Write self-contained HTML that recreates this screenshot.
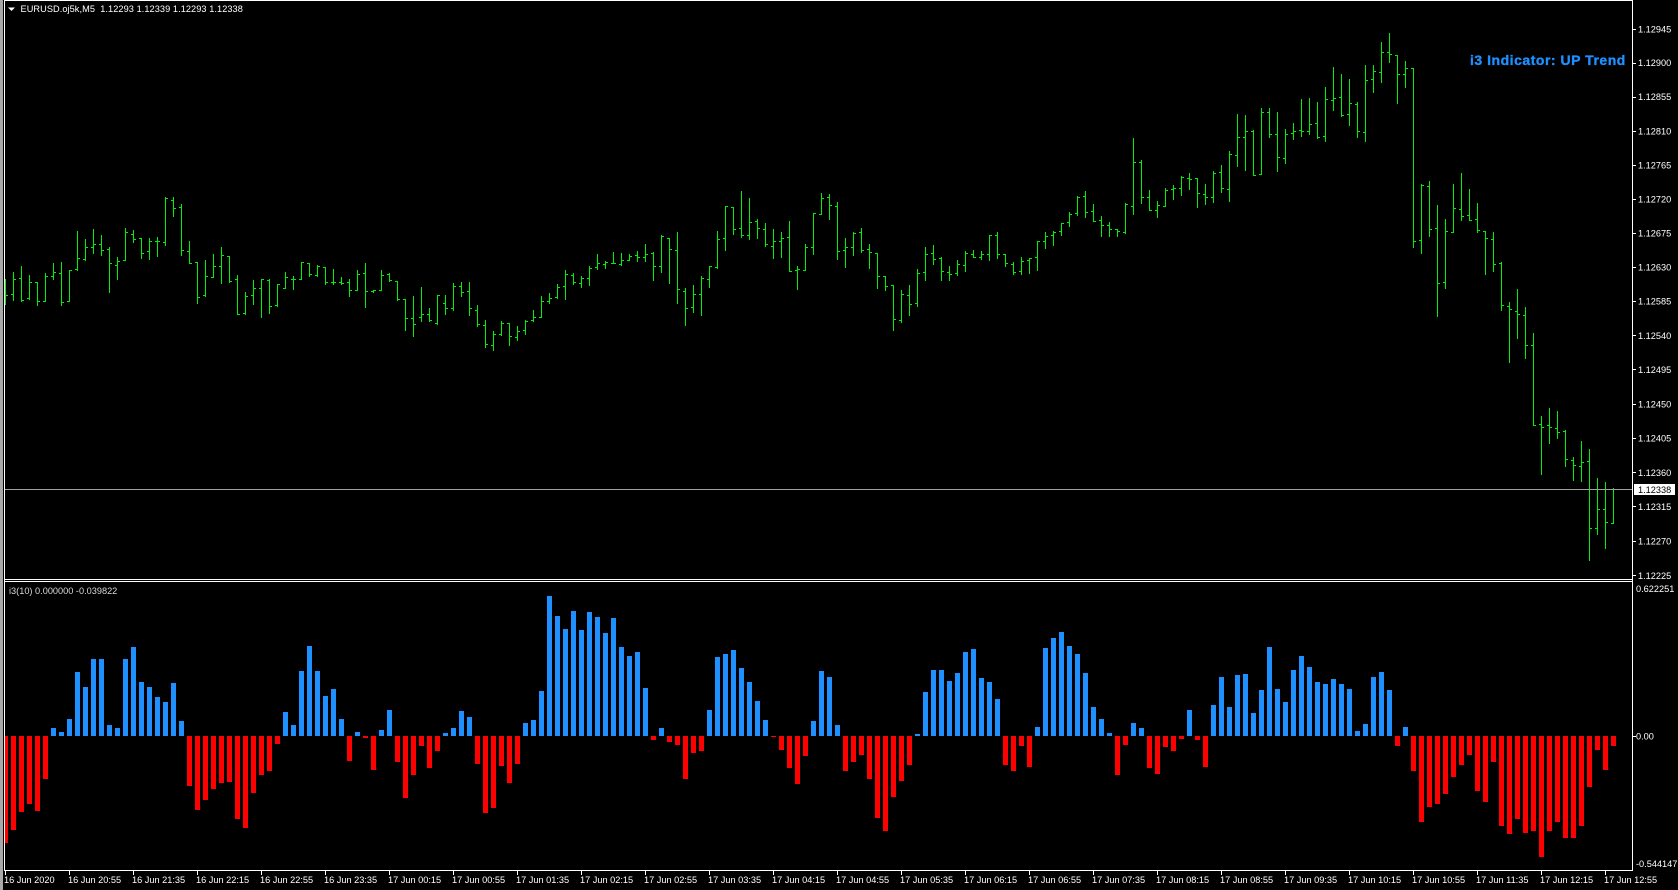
<!DOCTYPE html>
<html><head><meta charset="utf-8"><title>EURUSD M5</title>
<style>
html,body{margin:0;padding:0;background:#000;width:1678px;height:890px;overflow:hidden}
svg{display:block;position:absolute;left:0;top:0}
text{font-family:"Liberation Sans",sans-serif;font-size:9.2px;fill:#fff;white-space:pre}
</style></head><body>
<svg width="1678" height="890" viewBox="0 0 1678 890" xmlns="http://www.w3.org/2000/svg" shape-rendering="crispEdges">
<rect width="1678" height="890" fill="#000"/>
<path fill="none" stroke="#00ee08" stroke-width="1" d="M5.5 279V305M6 295.5h2
M13.5 272V301M11 294.5h2M14 279.5h2
M21.5 266V302M19 278.5h2M22 300.5h2
M29.5 275V300M27 298.5h2M30 282.5h2
M37.5 282V306M35 282.5h2M38 301.5h2
M45.5 273V302M43 301.5h2M46 276.5h2
M53.5 263V280M51 276.5h2M54 272.5h2
M61.5 262V306M59 273.5h2M62 302.5h2
M69.5 270V302M67 301.5h2M70 270.5h2
M77.5 231V271M75 269.5h2M78 258.5h2
M85.5 239V261M83 259.5h2M86 247.5h2
M93.5 229V254M91 247.5h2M94 244.5h2
M101.5 235V256M99 244.5h2M102 250.5h2
M109.5 247V293M107 249.5h2M110 263.5h2
M117.5 257V280M115 265.5h2M118 261.5h2
M125.5 228V261M123 260.5h2M126 232.5h2
M133.5 230V243M131 234.5h2M134 239.5h2
M141.5 238V259M139 238.5h2M142 253.5h2
M149.5 238V260M147 251.5h2M150 241.5h2
M157.5 237V257M155 241.5h2M158 241.5h2
M165.5 197V246M163 242.5h2M166 198.5h2
M173.5 197V217M171 200.5h2M174 208.5h2
M181.5 204V256M179 207.5h2M182 250.5h2
M189.5 241V264M187 251.5h2M190 263.5h2
M197.5 262V304M195 262.5h2M198 297.5h2
M205.5 260V297M203 295.5h2M206 276.5h2
M213.5 254V278M211 277.5h2M214 266.5h2
M221.5 247V284M219 266.5h2M222 255.5h2
M229.5 256V283M227 256.5h2M230 281.5h2
M237.5 275V315M235 279.5h2M238 314.5h2
M245.5 292V315M243 313.5h2M246 296.5h2
M253.5 280V305M251 295.5h2M254 288.5h2
M261.5 279V318M259 288.5h2M262 279.5h2
M269.5 279V314M267 280.5h2M270 306.5h2
M277.5 284V307M275 305.5h2M278 284.5h2
M285.5 272V289M283 288.5h2M286 277.5h2
M293.5 276V290M291 279.5h2M294 279.5h2
M301.5 262V280M299 279.5h2M302 262.5h2
M309.5 263V277M307 263.5h2M310 274.5h2
M317.5 265V277M315 275.5h2M318 266.5h2
M325.5 267V285M323 267.5h2M326 282.5h2
M333.5 269V285M331 282.5h2M334 282.5h2
M341.5 277V285M339 282.5h2M342 283.5h2
M349.5 279V297M347 282.5h2M350 290.5h2
M357.5 270V291M355 290.5h2M358 274.5h2
M365.5 263V308M363 273.5h2M366 291.5h2
M373.5 290V293M371 291.5h2M374 290.5h2
M381.5 270V291M379 290.5h2M382 275.5h2
M389.5 273V282M387 274.5h2M390 280.5h2
M397.5 281V301M395 281.5h2M398 299.5h2
M405.5 299V331M403 299.5h2M406 318.5h2
M413.5 296V337M411 318.5h2M414 324.5h2
M421.5 287V322M419 317.5h2M422 314.5h2
M429.5 308V322M427 314.5h2M430 320.5h2
M437.5 295V325M435 323.5h2M438 295.5h2
M445.5 295V315M443 303.5h2M446 308.5h2
M453.5 283V311M451 308.5h2M454 286.5h2
M461.5 282V297M459 286.5h2M462 292.5h2
M469.5 282V316M467 291.5h2M470 308.5h2
M477.5 305V327M475 310.5h2M478 324.5h2
M485.5 320V348M483 325.5h2M486 344.5h2
M493.5 331V351M491 345.5h2M494 334.5h2
M501.5 321V336M499 334.5h2M502 323.5h2
M509.5 323V346M507 323.5h2M510 336.5h2
M517.5 326V341M515 337.5h2M518 331.5h2
M525.5 320V335M523 330.5h2M526 321.5h2
M533.5 310V322M531 320.5h2M534 317.5h2
M541.5 296V318M539 317.5h2M542 301.5h2
M549.5 293V304M547 301.5h2M550 298.5h2
M557.5 284V299M555 297.5h2M558 287.5h2
M565.5 270V300M563 286.5h2M566 274.5h2
M573.5 273V285M571 275.5h2M574 282.5h2
M581.5 276V288M579 283.5h2M582 278.5h2
M589.5 266V286M587 278.5h2M590 268.5h2
M597.5 254V270M595 267.5h2M598 263.5h2
M605.5 261V269M603 264.5h2M606 262.5h2
M613.5 252V264M611 263.5h2M614 263.5h2
M621.5 253V266M619 264.5h2M622 260.5h2
M629.5 254V261M627 260.5h2M630 256.5h2
M637.5 251V262M635 255.5h2M638 257.5h2
M645.5 244V262M643 257.5h2M646 254.5h2
M653.5 252V281M651 253.5h2M654 266.5h2
M661.5 235V273M659 266.5h2M662 236.5h2
M669.5 238V284M667 238.5h2M670 249.5h2
M677.5 232V304M675 250.5h2M678 289.5h2
M685.5 288V326M683 291.5h2M686 308.5h2
M693.5 285V313M691 307.5h2M694 294.5h2
M701.5 276V316M699 294.5h2M702 278.5h2
M709.5 266V288M707 279.5h2M710 266.5h2
M717.5 231V269M715 267.5h2M718 239.5h2
M725.5 206V251M723 238.5h2M726 206.5h2
M733.5 207V235M731 207.5h2M734 229.5h2
M741.5 191V238M739 228.5h2M742 235.5h2
M749.5 198V240M747 235.5h2M750 222.5h2
M757.5 219V239M755 221.5h2M758 228.5h2
M765.5 223V247M763 229.5h2M766 244.5h2
M773.5 229V259M771 246.5h2M774 241.5h2
M781.5 232V258M779 241.5h2M782 238.5h2
M789.5 221V272M787 237.5h2M790 271.5h2
M797.5 266V290M795 270.5h2M798 269.5h2
M805.5 244V271M803 270.5h2M806 247.5h2
M813.5 213V255M811 247.5h2M814 213.5h2
M821.5 193V215M819 214.5h2M822 198.5h2
M829.5 194V220M827 197.5h2M830 205.5h2
M837.5 202V260M835 206.5h2M838 251.5h2
M845.5 238V268M843 250.5h2M846 247.5h2
M853.5 232V256M851 247.5h2M854 233.5h2
M861.5 228V253M859 232.5h2M862 250.5h2
M869.5 244V269M867 249.5h2M870 252.5h2
M877.5 253V289M875 253.5h2M878 276.5h2
M885.5 276V291M883 276.5h2M886 286.5h2
M893.5 285V331M891 285.5h2M894 319.5h2
M901.5 290V323M899 320.5h2M902 294.5h2
M909.5 285V316M907 295.5h2M910 304.5h2
M917.5 269V307M915 303.5h2M918 273.5h2
M925.5 247V281M923 272.5h2M926 254.5h2
M933.5 245V265M931 253.5h2M934 259.5h2
M941.5 257V281M939 258.5h2M942 271.5h2
M949.5 266V281M947 272.5h2M950 274.5h2
M957.5 260V276M955 273.5h2M958 264.5h2
M965.5 251V272M963 265.5h2M966 253.5h2
M973.5 250V258M971 254.5h2M974 257.5h2
M981.5 251V260M979 257.5h2M982 254.5h2
M989.5 235V261M987 254.5h2M990 235.5h2
M997.5 232V259M995 235.5h2M998 254.5h2
M1005.5 254V267M1003 254.5h2M1006 263.5h2
M1013.5 262V275M1011 264.5h2M1014 272.5h2
M1021.5 257V275M1019 271.5h2M1022 261.5h2
M1029.5 258V274M1027 260.5h2M1030 258.5h2
M1037.5 241V271M1035 257.5h2M1038 241.5h2
M1045.5 232V249M1043 241.5h2M1046 236.5h2
M1053.5 231V246M1051 235.5h2M1054 232.5h2
M1061.5 223V236M1059 231.5h2M1062 223.5h2
M1069.5 212V227M1067 222.5h2M1070 214.5h2
M1077.5 196V216M1075 213.5h2M1078 197.5h2
M1085.5 191V218M1083 196.5h2M1086 212.5h2
M1093.5 204V222M1091 211.5h2M1094 221.5h2
M1101.5 216V237M1099 220.5h2M1102 225.5h2
M1109.5 222V237M1107 225.5h2M1110 229.5h2
M1117.5 229V237M1115 229.5h2M1118 231.5h2
M1125.5 203V234M1123 232.5h2M1126 204.5h2
M1133.5 138V215M1131 206.5h2M1134 162.5h2
M1141.5 160V204M1139 162.5h2M1142 197.5h2
M1149.5 190V211M1147 197.5h2M1150 210.5h2
M1157.5 201V218M1155 210.5h2M1158 205.5h2
M1165.5 188V207M1163 206.5h2M1166 190.5h2
M1173.5 185V200M1171 189.5h2M1174 188.5h2
M1181.5 176V196M1179 188.5h2M1182 177.5h2
M1189.5 173V190M1187 178.5h2M1190 179.5h2
M1197.5 178V208M1195 178.5h2M1198 193.5h2
M1205.5 184V205M1203 194.5h2M1206 197.5h2
M1213.5 171V203M1211 197.5h2M1214 173.5h2
M1221.5 165V193M1219 172.5h2M1222 188.5h2
M1229.5 151V202M1227 189.5h2M1230 154.5h2
M1237.5 114V167M1235 155.5h2M1238 137.5h2
M1245.5 115V171M1243 137.5h2M1246 131.5h2
M1253.5 130V176M1251 131.5h2M1254 175.5h2
M1261.5 108V175M1259 174.5h2M1262 112.5h2
M1269.5 108V138M1267 112.5h2M1270 134.5h2
M1277.5 112V172M1275 134.5h2M1278 157.5h2
M1285.5 129V164M1283 158.5h2M1286 134.5h2
M1293.5 123V140M1291 133.5h2M1294 131.5h2
M1301.5 99V137M1299 130.5h2M1302 131.5h2
M1309.5 98V135M1307 131.5h2M1310 124.5h2
M1317.5 102V139M1315 123.5h2M1318 137.5h2
M1325.5 87V142M1323 136.5h2M1326 99.5h2
M1333.5 67V111M1331 100.5h2M1334 98.5h2
M1341.5 74V117M1339 97.5h2M1342 115.5h2
M1349.5 79V126M1347 114.5h2M1350 103.5h2
M1357.5 102V138M1355 104.5h2M1358 131.5h2
M1365.5 65V142M1363 132.5h2M1366 80.5h2
M1373.5 65V93M1371 79.5h2M1374 71.5h2
M1381.5 42V83M1379 72.5h2M1382 52.5h2
M1389.5 33V63M1387 52.5h2M1390 54.5h2
M1397.5 55V104M1395 55.5h2M1398 74.5h2
M1405.5 61V88M1403 74.5h2M1406 68.5h2
M1413.5 68V248M1411 68.5h2M1414 241.5h2
M1421.5 184V254M1419 240.5h2M1422 185.5h2
M1429.5 181V237M1427 186.5h2M1430 229.5h2
M1437.5 205V317M1435 228.5h2M1438 283.5h2
M1445.5 219V289M1443 282.5h2M1446 231.5h2
M1453.5 184V233M1451 232.5h2M1454 208.5h2
M1461.5 173V221M1459 209.5h2M1462 216.5h2
M1469.5 189V221M1467 215.5h2M1470 220.5h2
M1477.5 203V233M1475 219.5h2M1478 230.5h2
M1485.5 231V275M1483 231.5h2M1486 238.5h2
M1493.5 232V272M1491 239.5h2M1494 264.5h2
M1501.5 262V311M1499 263.5h2M1502 305.5h2
M1509.5 302V363M1507 306.5h2M1510 309.5h2
M1517.5 289V339M1515 311.5h2M1518 314.5h2
M1525.5 307V359M1523 315.5h2M1526 345.5h2
M1533.5 333V426M1531 345.5h2M1534 425.5h2
M1541.5 416V475M1539 424.5h2M1542 427.5h2
M1549.5 408V444M1547 425.5h2M1550 427.5h2
M1557.5 411V439M1555 428.5h2M1558 432.5h2
M1565.5 430V467M1563 431.5h2M1566 459.5h2
M1573.5 457V481M1571 460.5h2M1574 465.5h2
M1581.5 441V482M1579 466.5h2M1582 462.5h2
M1589.5 449V561M1587 461.5h2M1590 528.5h2
M1597.5 478V535M1595 528.5h2M1598 509.5h2
M1605.5 482V549M1603 509.5h2M1606 522.5h2
M1613.5 488V524M1611 523.5h2M1614 489.5h2"/>
<path fill="none" stroke="#1e90ff" stroke-width="5" d="M53.5 736v-8M61.5 736v-4M69.5 736v-17M77.5 736v-64M85.5 736v-49M93.5 736v-77M101.5 736v-77M109.5 736v-11M117.5 736v-8M125.5 736v-77M133.5 736v-89M141.5 736v-54M149.5 736v-49M157.5 736v-39M165.5 736v-34M173.5 736v-53M181.5 736v-15
M285.5 736v-24M293.5 736v-11M301.5 736v-65M309.5 736v-90M317.5 736v-65M325.5 736v-40M333.5 736v-47M341.5 736v-17M357.5 736v-4M381.5 736v-6M389.5 736v-26
M445.5 736v-3M453.5 736v-8M461.5 736v-25M469.5 736v-19
M525.5 736v-13M533.5 736v-16M541.5 736v-45M549.5 736v-140M557.5 736v-120M565.5 736v-107M573.5 736v-125M581.5 736v-106M589.5 736v-124M597.5 736v-119M605.5 736v-103M613.5 736v-118M621.5 736v-89M629.5 736v-80M637.5 736v-84M645.5 736v-48M661.5 736v-8
M709.5 736v-26M717.5 736v-79M725.5 736v-82M733.5 736v-86M741.5 736v-68M749.5 736v-54M757.5 736v-35M765.5 736v-16
M813.5 736v-15M821.5 736v-65M829.5 736v-59M837.5 736v-11
M917.5 736v-2M925.5 736v-44M933.5 736v-66M941.5 736v-66M949.5 736v-55M957.5 736v-63M965.5 736v-84M973.5 736v-87M981.5 736v-58M989.5 736v-54M997.5 736v-37
M1037.5 736v-9M1045.5 736v-88M1053.5 736v-98M1061.5 736v-104M1069.5 736v-90M1077.5 736v-82M1085.5 736v-63M1093.5 736v-29M1101.5 736v-17M1109.5 736v-3
M1133.5 736v-13M1141.5 736v-8M1189.5 736v-26
M1213.5 736v-31M1221.5 736v-59M1229.5 736v-29M1237.5 736v-61M1245.5 736v-62M1253.5 736v-23M1261.5 736v-46M1269.5 736v-89M1277.5 736v-47M1285.5 736v-34M1293.5 736v-66M1301.5 736v-80M1309.5 736v-69M1317.5 736v-54M1325.5 736v-52M1333.5 736v-57M1341.5 736v-52M1349.5 736v-47M1357.5 736v-5M1365.5 736v-12M1373.5 736v-59M1381.5 736v-64M1389.5 736v-46M1405.5 736v-9"/>
<path fill="none" stroke="#ff0000" stroke-width="5" d="M5.5 736v107M13.5 736v94M21.5 736v76M29.5 736v68M37.5 736v75M45.5 736v43
M189.5 736v50M197.5 736v74M205.5 736v64M213.5 736v53M221.5 736v47M229.5 736v46M237.5 736v83M245.5 736v92M253.5 736v57M261.5 736v39M269.5 736v35M277.5 736v8
M349.5 736v25M365.5 736v2M373.5 736v34M397.5 736v26M405.5 736v62M413.5 736v39M421.5 736v10M429.5 736v32M437.5 736v15
M477.5 736v28M485.5 736v77M493.5 736v72M501.5 736v30M509.5 736v47M517.5 736v28
M653.5 736v4M669.5 736v6M677.5 736v9M685.5 736v43M693.5 736v17M701.5 736v15
M773.5 736v1M781.5 736v14M789.5 736v32M797.5 736v48M805.5 736v20
M845.5 736v35M853.5 736v26M861.5 736v19M869.5 736v43M877.5 736v82M885.5 736v95M893.5 736v61M901.5 736v45M909.5 736v29
M1005.5 736v29M1013.5 736v35M1021.5 736v10M1029.5 736v31
M1117.5 736v39M1125.5 736v9M1149.5 736v32M1157.5 736v38M1165.5 736v11M1173.5 736v15M1181.5 736v3M1197.5 736v4M1205.5 736v31
M1397.5 736v10
M1413.5 736v35M1421.5 736v86M1429.5 736v71M1437.5 736v68M1445.5 736v58M1453.5 736v41M1461.5 736v29M1469.5 736v19M1477.5 736v55M1485.5 736v66M1493.5 736v26M1501.5 736v90M1509.5 736v98M1517.5 736v83M1525.5 736v97M1533.5 736v95M1541.5 736v121M1549.5 736v95M1557.5 736v86M1565.5 736v102M1573.5 736v102M1581.5 736v90M1589.5 736v51M1597.5 736v14M1605.5 736v34M1613.5 736v10"/>
<rect x="3" y="0" width="2" height="890" fill="#000"/>
<rect x="5" y="489" width="1627" height="1" fill="#a0a0a0"/>
<rect x="0" y="0" width="3" height="890" fill="#a8a8a8"/>
<g fill="#fff">
<rect x="4" y="0" width="1629" height="1"/>
<rect x="4" y="0" width="1" height="871"/>
<rect x="4" y="579" width="1629" height="1"/>
<rect x="4" y="581" width="1629" height="1"/>
<rect x="1632" y="0" width="1" height="871"/>
<rect x="4" y="870" width="1629" height="1"/>
</g>
<path fill="none" stroke="#fff" d="M1633 29.5h3M1633 63.5h3M1633 97.5h3M1633 131.5h3M1633 165.5h3M1633 199.5h3M1633 233.5h3M1633 267.5h3M1633 301.5h3M1633 335.5h3M1633 369.5h3M1633 404.5h3M1633 438.5h3M1633 472.5h3M1633 506.5h3M1633 541.5h3M1633 575.5h3M1633 736.5h3
M5.5 871v4M69.5 871v4M133.5 871v4M197.5 871v4M261.5 871v4M325.5 871v4M389.5 871v4M453.5 871v4M517.5 871v4M581.5 871v4M645.5 871v4M709.5 871v4M773.5 871v4M837.5 871v4M901.5 871v4M965.5 871v4M1029.5 871v4M1093.5 871v4M1157.5 871v4M1221.5 871v4M1285.5 871v4M1349.5 871v4M1413.5 871v4M1477.5 871v4M1541.5 871v4M1605.5 871v4"/>
<path fill="#fff" shape-rendering="auto" d="M8 7.5h7l-3.5 3.5z"/>
<rect x="1634" y="484" width="41" height="11" fill="#fff"/>
<g shape-rendering="auto">
<text x="20.5" y="12" style="letter-spacing:.07px">EURUSD.oj5k,M5  1.12293 1.12339 1.12293 1.12338</text>
<text x="9" y="594" style="fill:#d8d8d8">i3(10) 0.000000 -0.039822</text>
<text x="1470" y="65" style="font-size:14px;font-weight:bold;fill:#1e90ff;stroke:#1e90ff;stroke-width:.35px;letter-spacing:.52px">i3 Indicator: UP Trend</text>
<text x="1638" y="32.5">1.12945</text>
<text x="1638" y="66">1.12900</text>
<text x="1638" y="100">1.12855</text>
<text x="1638" y="134.5">1.12810</text>
<text x="1638" y="168.5">1.12765</text>
<text x="1638" y="202.5">1.12720</text>
<text x="1638" y="236.5">1.12675</text>
<text x="1638" y="270.5">1.12630</text>
<text x="1638" y="304.5">1.12585</text>
<text x="1638" y="339">1.12540</text>
<text x="1638" y="373">1.12495</text>
<text x="1638" y="407.5">1.12450</text>
<text x="1638" y="441.5">1.12405</text>
<text x="1638" y="476">1.12360</text>
<text x="1638" y="493" style="fill:#000">1.12338</text>
<text x="1638" y="510">1.12315</text>
<text x="1638" y="544.5">1.12270</text>
<text x="1638" y="579">1.12225</text>
<text x="1636" y="592">0.622251</text>
<text x="1636" y="739.5">0.00</text>
<text x="1636" y="867">-0.544147</text>
<text x="4" y="883">16 Jun 2020</text>
<text x="68" y="883">16 Jun 20:55</text>
<text x="132" y="883">16 Jun 21:35</text>
<text x="196" y="883">16 Jun 22:15</text>
<text x="260" y="883">16 Jun 22:55</text>
<text x="324" y="883">16 Jun 23:35</text>
<text x="388" y="883">17 Jun 00:15</text>
<text x="452" y="883">17 Jun 00:55</text>
<text x="516" y="883">17 Jun 01:35</text>
<text x="580" y="883">17 Jun 02:15</text>
<text x="644" y="883">17 Jun 02:55</text>
<text x="708" y="883">17 Jun 03:35</text>
<text x="772" y="883">17 Jun 04:15</text>
<text x="836" y="883">17 Jun 04:55</text>
<text x="900" y="883">17 Jun 05:35</text>
<text x="964" y="883">17 Jun 06:15</text>
<text x="1028" y="883">17 Jun 06:55</text>
<text x="1092" y="883">17 Jun 07:35</text>
<text x="1156" y="883">17 Jun 08:15</text>
<text x="1220" y="883">17 Jun 08:55</text>
<text x="1284" y="883">17 Jun 09:35</text>
<text x="1348" y="883">17 Jun 10:15</text>
<text x="1412" y="883">17 Jun 10:55</text>
<text x="1476" y="883">17 Jun 11:35</text>
<text x="1540" y="883">17 Jun 12:15</text>
<text x="1604" y="883">17 Jun 12:55</text>
</g>
</svg>
</body></html>
